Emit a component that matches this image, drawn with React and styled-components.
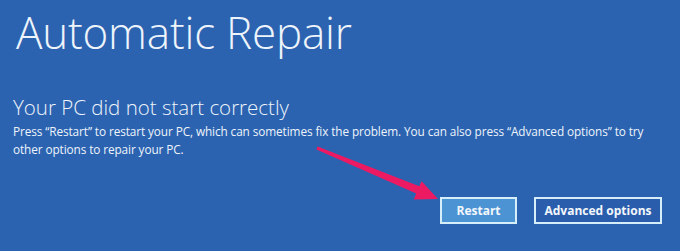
import React from "react";
import styled, { createGlobalStyle } from "styled-components";

const Global = createGlobalStyle`
  html, body { margin: 0; padding: 0; background: #2b63b0; }
  body { width: 680px; height: 251px; overflow: hidden; }
`;

const Screen = styled.div`
  position: relative;
  width: 680px;
  height: 251px;
  box-sizing: border-box;
  background: #2b63b0;
  color: #eef4fb;
  font-family: "Open Sans", "Noto Sans", sans-serif;
  padding: 0 18px 0 13px;
  display: flex;
  flex-direction: column;
`;

const Title = styled.h1`
  margin: 4px 0 0 3px;
  font-weight: 300;
  font-size: 44px;
  letter-spacing: -0.2px;
  line-height: 56px;
  white-space: nowrap;
`;

const Subtitle = styled.h2`
  margin: 34.5px 0 0 0;
  font-weight: 300;
  font-size: 20.5px;
  line-height: 24px;
  white-space: nowrap;
`;

const Body = styled.p`
  margin: 3px 0 0 0;
  font-size: 11.8px;
  letter-spacing: -0.1px;
  line-height: 18px;
  max-width: 652px;
`;

const Actions = styled.div`
  display: flex;
  justify-content: flex-end;
  gap: 17px;
  margin-top: 39px;
`;

const Button = styled.button`
  box-sizing: border-box;
  height: 27px;
  width: ${(p) => p.$w}px;
  border: 2px solid #d6eefa;
  background: ${(p) => (p.$primary ? "#4c93d4" : "#2a5dab")};
  color: #f2f7fc;
  font-family: "Open Sans", "Noto Sans", sans-serif;
  font-weight: 700;
  font-size: 12px;
  padding: 0;
`;

const Arrow = styled.svg`
  position: absolute;
  left: 0;
  top: 0;
  pointer-events: none;
`;

export default function App() {
  return (
    <>
      <Global />
      <Screen>
        <Title>Automatic Repair</Title>
        <Subtitle>Your PC did not start correctly</Subtitle>
        <Body>
          Press “Restart” to restart your PC, which can sometimes fix the problem. You can also press “Advanced options” to try
          other options to repair your PC.
        </Body>
        <Actions>
          <Button $primary $w={77}>Restart</Button>
          <Button $w={128}>Advanced options</Button>
        </Actions>
        <Arrow width="680" height="251" viewBox="0 0 680 251">
          <polygon
            points="316.4,149.4 317.6,146.6 419.3,186.3 421.6,181.2 438,199 413.8,199.6 416.2,193.6"
            fill="#ec1a62"
          />
        </Arrow>
      </Screen>
    </>
  );
}
